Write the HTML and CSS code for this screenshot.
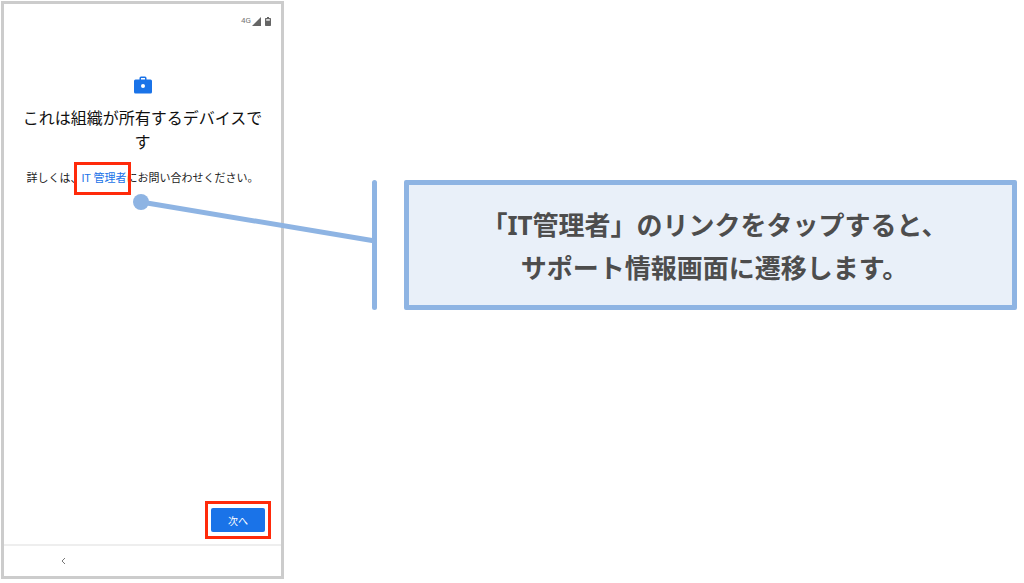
FILE: index.html
```html
<!DOCTYPE html>
<html lang="ja">
<head>
  <meta charset="UTF-8">
  <meta name="viewport" content="width=device-width, initial-scale=1.0">
  <title>これは組織が所有するデバイスです</title>
  <link rel="stylesheet" href="styles.css">
</head>
<body>
  <div class="guide">
    <div class="phone">
      <div class="status">
        <span>4G</span>
        <svg class="signal" viewBox="0 0 9 9"><path d="M9 0v9H0z"/></svg>
        <svg class="battery" viewBox="0 0 6 9"><path d="M2 0h2v1h1.3q.7 0 .7.7v6.6q0 .7-.7.7H.7Q0 9 0 8.300V1.700Q0 1 .7 1H2z"/><path d="M1.200 2h3.600v1.800H1.200z" fill="#ddd"/></svg>
      </div>

      <main class="content">
        <svg class="briefcase" viewBox="0 0 18 18">
          <path fill-rule="evenodd" d="M5.500 3.500V2q0-1.500 1.500-1.500h4q1.500 0 1.500 1.500v1.500H16.500q1.500 0 1.500 1.500v11q0 1.500-1.500 1.500h-15q-1.500 0-1.500-1.500v-11q0-1.500 1.500-1.500zM7 3.500h4V2H7z"/>
          <circle cx="9" cy="10" r="2" fill="#fff"/>
        </svg>
        <h1>これは組織が所有するデバイスです</h1>
        <p>詳しくは、<a class="admin" href="#">IT 管理者</a>にお問い合わせください。</p>
      </main>

      <div class="actions">
        <div class="mark"><button class="next" type="button">次へ</button></div>
      </div>

      <nav class="navbar">
        <button class="back" type="button" aria-label="戻る">
          <svg viewBox="0 0 5 8"><path d="M4 1L1 4l3 3"/></svg>
        </button>
      </nav>

      <svg class="connector" viewBox="0 0 244 58">
        <path d="M8 9l234 39"/>
        <circle cx="8" cy="9" r="8"/>
      </svg>
    </div>

    <div class="note">
      <div class="bar"></div>
      <div class="callout">「IT管理者」のリンクをタップすると、<br>サポート情報画面に遷移します。</div>
    </div>
  </div>
</body>
</html>
```
FILE: styles.css
```css
* { box-sizing: border-box; }
body { margin: 0; background: #fff; font-family: Roboto, "Noto Sans CJK JP", sans-serif; color: #222; }
.guide { display: flex; min-height: 100vh; padding: 1px 7px 4px 1px; }

.phone { position: relative; display: flex; flex-direction: column; flex: 0 0 283px; border: 3px solid #ccc; }
.status { display: flex; justify-content: flex-end; align-items: center; gap: 1px; padding: 12px 10px 0 0; font-size: 8px; line-height: 10px; color: #777; }
.status svg { fill: #666; }
.signal { width: 9px; height: 9px; }
.battery { width: 6px; height: 9px; margin-left: 3px; }

.content { flex: 1; padding: 50px 16px 0; text-align: center; }
.briefcase { display: block; width: 18px; height: 18px; margin: 0 auto; fill: #1a73e8; }
h1 { margin: 13px 0 0; font-size: 16px; font-weight: 400; line-height: 24px; color: #111; }
p { margin: 16px 0 0; font-size: 11px; line-height: 16px; white-space: nowrap; }
.admin { position: relative; color: #1a73e8; text-decoration: none; }
.admin::after { content: ""; position: absolute; inset: -10px -5px -10px -8px; border: 3px solid #ff2a0a; }

.actions { display: flex; justify-content: flex-end; padding: 0 10px 5px; }
.mark { padding: 4px 3px; border: 3px solid #ff2a0a; }
.next { display: block; width: 54px; height: 24px; padding: 0; border: 0; border-radius: 2px; background: #1a73e8; color: #fff; font: inherit; font-size: 10px; }

.navbar { display: flex; align-items: center; height: 32px; padding-left: 57px; border-top: 2px solid #eee; }
.back { display: flex; padding: 0; border: 0; background: none; }
.back svg { width: 5px; height: 8px; fill: none; stroke: #777; }

.connector { position: absolute; left: 129px; top: 189px; width: 244px; height: 58px; fill: #8eb4e3; }
.connector path { stroke: #8eb4e3; stroke-width: 5; }

.note { display: flex; flex: 1; align-self: flex-start; gap: 27px; margin: 179px 0 0 88px; }
.bar { width: 5px; border-radius: 3px; background: #8eb4e3; }
.callout { flex: 1; padding: 19px 0 15px 8px; border: 5px solid #8eb4e3; border-radius: 2px; background: #e9f0f9; color: #4d4d4d; font-family: "Noto Sans", "Noto Sans CJK JP", sans-serif; font-size: 26px; font-weight: 700; line-height: 43px; text-align: center; }
```
